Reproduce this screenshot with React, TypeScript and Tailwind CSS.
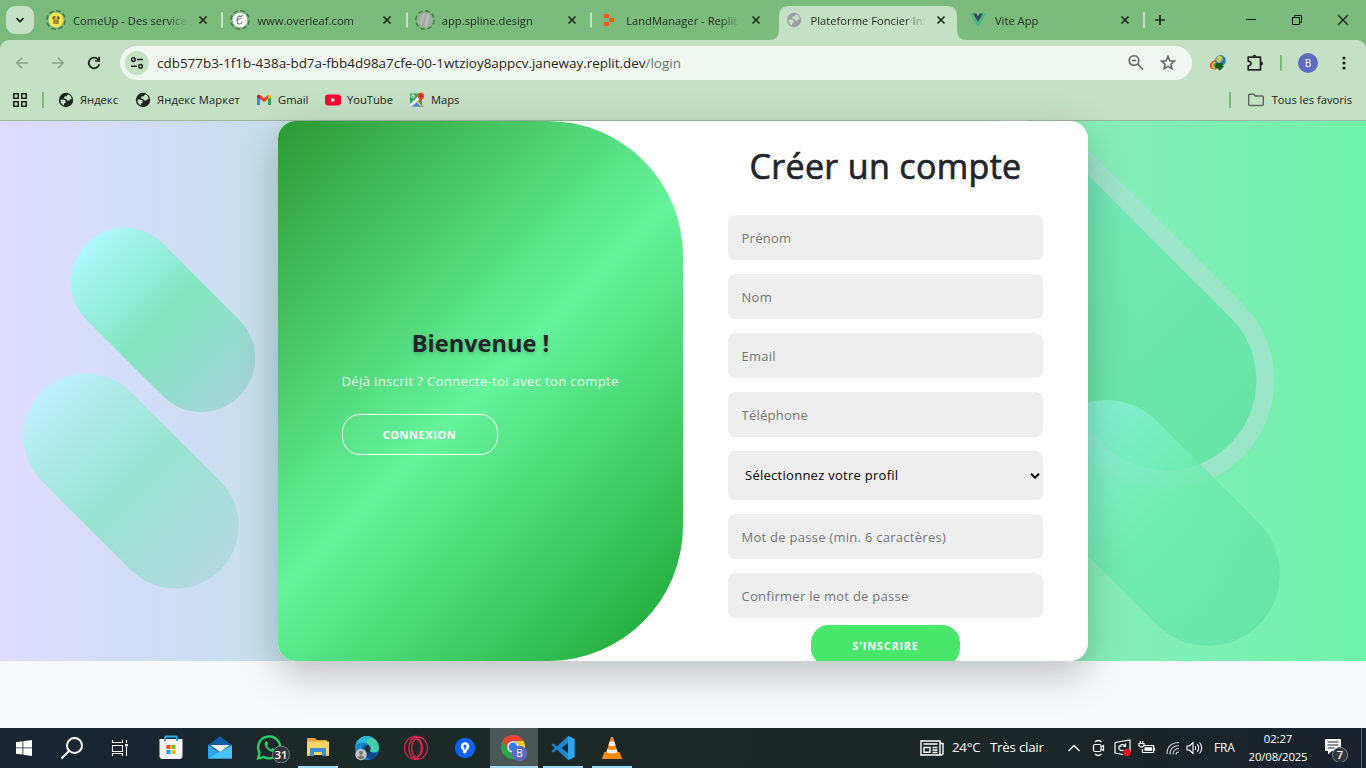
import React from "react";

function Globe({ color, bg }: { color: string; bg: string }) {
  return (
    <svg width="16" height="16" viewBox="0 0 16 16" className="shrink-0">
      <circle cx="8" cy="8" r="7.2" fill={color} />
      <path d="M2.400 7.600 6.200 7.800Q7.800 8 7.600 9.600L7.400 11.200 6 11.200 6 13.600Q2.400 12 2.400 7.600z" fill={bg} />
      <path d="M6.200 6.400V5Q6.200 4.200 7.600 4.200H9V3.200L10.800 2.600Q13.400 4 13.800 7.200H12.400Q11.600 7.200 11.400 8.400H9.200Q8.600 6.400 6.200 6.400z" fill={bg} />
      <path d="M9.600 9h2.600q.6 0 .6 1.400l-1.200 1.200H10.200z" fill={color} />
    </svg>
  );
}

function DashedIcon({ children }: { children: React.ReactNode }) {
  return (
    <svg width="20" height="20" viewBox="0 0 20 20" className="shrink-0">
      <circle cx="10" cy="10" r="9.2" fill="none" stroke="#4d754e" strokeWidth="1.5" strokeDasharray="4.6 2.6" />
      {children}
    </svg>
  );
}

function ComeUpIcon() {
  return (
    <DashedIcon>
      <circle cx="10" cy="10" r="7.3" fill="#ffe94a" />
      <path d="M9.600 6.800H8.200q-1.200 0-1.200 1.100t1.200 1.100h1.400M10.400 9h1.400q1.200 0 1.200-1.100t-1.200-1.100h-.8M7 11h6M7.200 13h5.600" stroke="#3a3a20" strokeWidth="1.200" fill="none" />
    </DashedIcon>
  );
}

function OverleafIcon() {
  return (
    <DashedIcon>
      <circle cx="10" cy="10" r="7.3" fill="#fff" />
      <path d="M11.800 8.200Q8 8.600 7.200 11.200q-.4 2.800 2.200 2.800 2.400-.2 2.400-2.200M8.600 6.800q2.600-.2 4.600-1.600M9.800 5.400q-2.800 1.600-3.200 5" stroke="#7c7c7c" strokeWidth="1.100" fill="none" />
    </DashedIcon>
  );
}

function SplineIcon() {
  return (
    <DashedIcon>
      <circle cx="10" cy="10" r="7.3" fill="#a8a8a8" />
      <path d="M8 4l2-.6L6.500 15l-1.700-1.800zM12 4l2.500 1L12 16.500l-2.500.5z" fill="#bcbcbc" />
    </DashedIcon>
  );
}

function ReplitIcon() {
  return (
    <svg width="16" height="16" viewBox="0 0 16 16" className="shrink-0">
      <g fill="#ff5a0c">
        <rect x="3" y="2" width="5" height="4" rx="1" />
        <rect x="8" y="6" width="5.200" height="4" rx="1" />
        <rect x="3" y="10" width="5" height="4" rx="1" />
      </g>
    </svg>
  );
}

function VueIcon() {
  return (
    <svg width="16" height="16" viewBox="0 0 16 16" className="shrink-0">
      <path d="M0 1.500h3.200L8 9.800l4.800-8.300H16L8 15z" fill="#41b883" />
      <path d="M3.200 1.500h3L8 4.600l1.800-3.100h3L8 9.800z" fill="#35495e" />
    </svg>
  );
}

function CloseX({ color }: { color: string }) {
  return (
    <svg width="16" height="16" viewBox="0 0 16 16" className="shrink-0">
      <path d="M4.500 4.500l7 7M11.500 4.500l-7 7" stroke={color} strokeWidth="1.700" />
    </svg>
  );
}

const tabs = [
  { title: "ComeUp - Des services", icon: <ComeUpIcon />, sep: true },
  { title: "www.overleaf.com", icon: <OverleafIcon />, sep: true },
  { title: "app.spline.design", icon: <SplineIcon />, sep: true },
  { title: "LandManager - Replit", icon: <ReplitIcon />, sep: false },
  { title: "Plateforme Foncier Int", icon: <Globe color="#9a9fa8" bg="#c5e1c5" />, sep: false, active: true },
  { title: "Vite App", icon: <VueIcon />, sep: true },
];

function TabStrip() {
  return (
    <div className="flex h-10 shrink-0 bg-[#7bbb7c]">
      <div className="ml-[6px] mt-[6px] flex size-7 items-center justify-center rounded-[9px] bg-[#c5e1c5]">
        <svg width="12" height="12" viewBox="0 0 12 12">
          <path d="M2.500 4.200 6 7.700l3.500-3.500" stroke="#202421" strokeWidth="1.800" fill="none" />
        </svg>
      </div>
      <div className="ml-1 flex">
        {tabs.map((t) => (
          <div key={t.title} className="relative flex h-10 w-[184.400px] items-center">
            {t.active && (
              <svg className="absolute -left-[7px] top-[6px]" width="198" height="34" viewBox="0 0 198 34">
                <path d="M0 34q10 0 10-10V10Q10 0 20 0H178q10 0 10 10V24q0 10 10 10z" fill="#c5e1c5" />
              </svg>
            )}
            <div className="relative flex w-9 justify-center">{t.icon}</div>
            <div className="relative -ml-[1px] w-[121px] overflow-hidden whitespace-nowrap pt-px text-[11.200px] leading-4 text-[#1f2a20] [mask-image:linear-gradient(to_right,#000_94px,transparent_115px)]">
              {t.title}
            </div>
            <div className="relative ml-[1px]">
              <CloseX color="#202a21" />
            </div>
            {t.sep && <div className="absolute -right-[1px] top-3 h-4 w-[2px] rounded-full bg-[#c5e1c5]" />}
          </div>
        ))}
      </div>
      <svg className="ml-[8px] mt-3" width="16" height="16" viewBox="0 0 16 16">
        <path d="M8 3v10M3 8h10" stroke="#202a21" strokeWidth="1.700" />
      </svg>
      <div className="ml-auto flex pt-[14px]">
        <svg className="w-[46px]" height="12" viewBox="0 0 46 12"><path d="M18 5.500h10" stroke="#111" /></svg>
        <svg className="w-[46px]" height="12" viewBox="0 0 46 12">
          <path d="M18.500 3.500h7v7h-7zM20.500 3.500v-2h7v7h-2" stroke="#111" fill="none" />
        </svg>
        <svg className="w-[46px]" height="12" viewBox="0 0 46 12"><path d="M18 1l10 10M28 1 18 11" stroke="#111" strokeWidth="1.100" /></svg>
      </div>
    </div>
  );
}

function Toolbar() {
  return (
    <div className="bg-[#7bbb7c]">
      <div className="flex h-10 items-center rounded-t-[9px] bg-[#c5e1c5] pt-[6px]">
        <svg className="ml-3" width="20" height="20" viewBox="0 0 20 20"><path d="M16 10H5M10 4.800 4.800 10l5.200 5.200" stroke="#8aa38b" strokeWidth="1.700" fill="none" /></svg>
        <svg className="ml-4" width="20" height="20" viewBox="0 0 20 20"><path d="M4 10h11M10 4.800l5.200 5.200-5.200 5.200" stroke="#8aa38b" strokeWidth="1.700" fill="none" /></svg>
        <svg className="ml-4" width="20" height="20" viewBox="0 0 20 20">
          <path d="M15.200 11.200A5.300 5.300 0 1 1 14 6.400l1.300 1.300" stroke="#202421" strokeWidth="1.800" fill="none" />
          <path d="M16 3.800v5h-5V7.200h3.300V3.800z" fill="#202421" />
        </svg>
        <div className="ml-4 flex h-[34px] w-[1072px] items-center rounded-full bg-[#f0f7f1] px-[5px]">
          <div className="flex size-6 items-center justify-center rounded-full bg-[#c5e1c5]">
            <svg width="14" height="14" viewBox="0 0 14 14" fill="none" stroke="#202421" strokeWidth="1.500">
              <circle cx="3.400" cy="3.600" r="1.800" /><path d="M7 3.600h6M1 10.200h6" /><circle cx="10.600" cy="10.200" r="1.800" />
            </svg>
          </div>
          <div className="ml-[8px] whitespace-nowrap text-[13.450px] leading-5 text-[#1f2320]">
            cdb577b3-1f1b-438a-bd7a-fbb4d98a7cfe-00-1wtzioy8appcv.janeway.replit.dev<span className="text-[#6c736d]">/login</span>
          </div>
          <svg className="ml-auto" width="18" height="18" viewBox="0 0 18 18" fill="none" stroke="#5a605b" strokeWidth="1.600">
            <circle cx="7" cy="6.500" r="4.800" /><path d="M4.800 6.500h4.400M10.500 10l5.500 5.500" />
          </svg>
          <svg className="ml-[14px] mr-[10px]" width="18" height="18" viewBox="0 0 18 18" fill="none" stroke="#5a605b" strokeWidth="1.500">
            <path d="M9 2.600l1.800 4.200 4.700.4-3.600 3 1.100 4.600L9 12.400l-4 2.400 1.100-4.600-3.600-3 4.700-.4z" />
          </svg>
        </div>
        <svg className="ml-[17px]" width="18" height="18" viewBox="0 0 18 18">
          <ellipse cx="7" cy="10.500" rx="6.500" ry="4.500" fill="#e23a2c" transform="rotate(-25 7 10.500)" />
          <ellipse cx="7.500" cy="10.800" rx="5.400" ry="3.600" fill="#f5d63a" transform="rotate(-25 7.500 10.800)" />
          <ellipse cx="8" cy="11" rx="4" ry="2.600" fill="#48b349" />
          <circle cx="11.500" cy="6.500" r="5.400" fill="#3c76b4" />
          <path d="M8 3q3-2 5-.5l.5 3.500-3 3L7 7z" fill="#c5cd55" />
          <path d="M6.500 9.500 14 8.800l-1 2.200 2 1.500-4.500 4.200-1.700-2.700-2.800.5z" fill="#0f5c17" />
        </svg>
        <svg className="ml-[18px]" width="20" height="20" viewBox="0 0 20 20" fill="none" stroke="#202421" strokeWidth="1.700">
          <path d="M3.200 4.200h12.300v12.600H3.200v-4q2.800-.5 2.800-2.300T3.200 8.200z" strokeLinejoin="round" />
          <path d="M7.400 3.800a2 2 0 0 1 4 0zM16 8.500a2 2 0 0 1 0 4z" fill="#202421" stroke="none" />
        </svg>
        <div className="ml-[15px] h-4 w-[2px] rounded-full bg-[#7bbb7c]" />
        <div className="ml-4 flex size-5 items-center justify-center rounded-full bg-[#5c6bc0] text-[10px] font-medium text-white">B</div>
        <svg className="ml-[17px]" width="18" height="18" viewBox="0 0 18 18" fill="#202421">
          <circle cx="9" cy="4" r="1.600" /><circle cx="9" cy="9" r="1.600" /><circle cx="9" cy="14" r="1.600" />
        </svg>
      </div>
    </div>
  );
}

function Bookmarks() {
  return (
    <div className="flex h-[41px] shrink-0 items-center border-b border-[#9cb59d] bg-[#c5e1c5] text-[11.200px] leading-4 text-[#1f2320]">
      <svg className="ml-3" width="16" height="16" viewBox="0 0 16 16" fill="none" stroke="#202421" strokeWidth="1.500">
        <path d="M1.750 1.750h4.500v4.500h-4.500zM9.750 1.750h4.500v4.500h-4.500zM1.750 9.750h4.500v4.500h-4.500zM9.750 9.750h4.500v4.500h-4.500z" />
      </svg>
      <div className="ml-[14px] h-4 w-[2px] bg-[#7bbb7c]" />
      <div className="ml-[14px] flex w-[77px] items-center gap-[6px]"><Globe color="#202421" bg="#c5e1c5" />Яндекс</div>
      <div className="flex w-[121px] items-center gap-[6px] whitespace-nowrap"><Globe color="#202421" bg="#c5e1c5" /><span className="tracking-[0.120px]">Яндекс Маркет</span></div>
      <div className="flex w-[69px] items-center gap-[6px]">
        <svg width="16" height="16" viewBox="0 0 16 16">
          <path d="M1 4v9h3V7z" fill="#4285f4" /><path d="M12 7v6h3V4z" fill="#34a853" />
          <path d="M4 3v4l4 3 4-3V3L8 6z" fill="#ea4335" /><path d="M1 4.500Q1 2 4 3v4L1 5.200z" fill="#c5221f" /><path d="M15 4.500Q15 2 12 3v4l3-1.800z" fill="#fbbc04" />
        </svg>
        Gmail
      </div>
      <div className="flex w-[84px] items-center gap-[6px]">
        <svg width="16" height="16" viewBox="0 0 16 16"><rect y="2.500" width="16" height="11" rx="3" fill="#f03" /><path d="M6.300 5.600v4.800l4-2.400z" fill="#fff" /></svg>
        YouTube
      </div>
      <div className="flex items-center gap-[6px]">
        <svg width="16" height="16" viewBox="0 0 16 16">
          <path d="M1 1.500h12v13H1z" fill="#34a853" /><path d="M7.500 8 15 14.500H2z" fill="#4285f4" /><path d="M1 14.500V12L9.500 4l2 2.500L3 14.500z" fill="#f5f5f5" /><path d="M9 9l4.500 5.500h-2L7.500 10z" fill="#fbc116" />
          <circle cx="3.800" cy="4.200" r="1.500" fill="none" stroke="#fff" /><path d="M8.600 4a3.300 3.300 0 0 1 6.600 0c0 2.200-2.200 3-3.300 6-1.100-3-3.300-3.800-3.300-6z" fill="#ea4335" /><circle cx="11.900" cy="4" r="1.100" fill="#8e1f16" />
        </svg>
        Maps
      </div>
      <div className="ml-auto h-4 w-[2px] bg-[#7bbb7c]" />
      <svg className="ml-4" width="18" height="16" viewBox="0 0 18 16" fill="none" stroke="#5a665b" strokeWidth="1.400">
        <path d="M1.700 3.200q0-1 1-1h4l1.700 1.800h6.900q1 0 1 1v7.500q0 1-1 1H2.700q-1 0-1-1z" />
      </svg>
      <div className="ml-[7px] mr-[14px] whitespace-nowrap">Tous les favoris</div>
    </div>
  );
}

function Hero() {
  return (
    <main className="relative z-10 flex h-[540px] shrink-0 justify-center bg-[linear-gradient(to_right,#dfdcff_0%,#cddef4_15%,#c9e0ee_18%,#8aeebc_79%,#6ff2aa_100%)]">
      <div className="absolute left-[109px] top-[91px] h-[216px] w-[108px] -rotate-45 rounded-full bg-[linear-gradient(180deg,#aef8fb_0%,#82e6be_50%,#a6d6da_100%)]" />
      <div className="absolute left-[68px] top-[234px] h-[252px] w-[126px] -rotate-45 rounded-full bg-[linear-gradient(180deg,#bdf0fc_0%,#98e4cf_50%,#b3d8e0_100%)]" />
      <div className="absolute left-[982px] top-[-33px] h-[432px] w-[216px] -rotate-45 rounded-full border-[18px] border-[#b9dce0]/50 bg-[linear-gradient(180deg,#78ecc4_0%,#70e8b0_50%,#67e5a6_100%)] bg-clip-padding" />
      <div className="absolute left-[1085px] top-[258px] h-[288px] w-[144px] -rotate-45 rounded-full bg-[linear-gradient(180deg,#92f5e4_0%,#6aebae_50%,#64e3a6_100%)] opacity-80" />
      <div className="relative flex w-[810px] rounded-[18px] shadow-[0_13px_40px_rgba(0,0,0,0.24)]">
        <div className="flex w-full overflow-hidden rounded-[18px] bg-white">
          <section className="flex w-[405px] flex-col items-center justify-center rounded-r-[135px] bg-[linear-gradient(135deg,#2c9933_0%,#65f49b_50%,#1ca431_100%)]">
            <div className="flex w-[278px] flex-col">
              <h1 className="text-center text-[23.600px] font-bold leading-[30px] text-[#212529] [text-shadow:0_2px_4px_rgba(0,0,0,0.2)]">Bienvenue !</h1>
              <p className="mt-[13px] whitespace-nowrap text-[13.200px] leading-5 tracking-[0.290px] text-white/85">Déjà inscrit ? Connecte-toi avec ton compte</p>
              <button className="mt-[23px] h-[41px] w-[156px] rounded-[18px] border border-white pt-[2px] text-[11px] font-bold tracking-[0.560px] text-white">CONNEXION</button>
            </div>
          </section>
          <section className="flex w-[405px] flex-col items-center px-[45px] text-[13px] tracking-[0.270px]">
            <h1 className="mt-[23px] whitespace-nowrap text-[34px] font-medium leading-[44px] tracking-[0.340px] text-[#212529] [-webkit-text-stroke:0.700px_#212529]">Créer un compte</h1>
            <form className="mt-[27px] flex w-full flex-col gap-[14px]">
              <input className="h-[45px] rounded-[7px] bg-[#eee] px-[13.500px] placeholder:text-[#757575]" placeholder="Prénom" />
              <input className="h-[45px] rounded-[7px] bg-[#eee] px-[13.500px] placeholder:text-[#757575]" placeholder="Nom" />
              <input className="h-[45px] rounded-[7px] bg-[#eee] px-[13.500px] placeholder:text-[#757575]" placeholder="Email" />
              <input className="h-[45px] rounded-[7px] bg-[#eee] px-[13.500px] placeholder:text-[#757575]" placeholder="Téléphone" />
              <div className="flex h-[49px] items-center justify-between rounded-[7px] bg-[#eee] pl-[17px] pr-[3px] text-black">
                <span className="pt-px">Sélectionnez votre profil</span>
                <svg width="10" height="8" viewBox="0 0 10 8"><path d="M1 1.800l4 3.800 4-3.800" stroke="#000" strokeWidth="2" fill="none" /></svg>
              </div>
              <input className="h-[45px] rounded-[7px] bg-[#eee] px-[13.500px] placeholder:text-[#757575]" placeholder="Mot de passe (min. 6 caractères)" />
              <input className="h-[45px] rounded-[7px] bg-[#eee] px-[13.500px] placeholder:text-[#757575]" placeholder="Confirmer le mot de passe" />
            </form>
            <button className="mt-[7px] h-[41px] w-[149px] shrink-0 rounded-[18px] bg-[#48e66a] pt-px text-[11px] font-bold tracking-[0.750px] text-white">S'INSCRIRE</button>
          </section>
        </div>
      </div>
    </main>
  );
}

const Store = () => (
  <svg width="26" height="28" viewBox="0 0 26 28">
    <path d="M7 7V4Q7 2.500 8.500 2.500h9Q19 2.500 19 4v3" fill="none" stroke="#27b5ea" strokeWidth="1.800" />
    <path d="M1.500 5h23v17q0 3-3 3h-17q-3 0-3-3z" fill="#f5f5f5" />
    <path d="M7 5v2M19 5v2" stroke="#1e8fc4" strokeWidth="1.800" />
    <path d="M8.500 11h4v4h-4z" fill="#f25022" /><path d="M13.500 11h4v4h-4z" fill="#7fba00" /><path d="M8.500 16h4v4h-4z" fill="#00a4ef" /><path d="M13.500 16h4v4h-4z" fill="#ffb900" />
  </svg>
);
const Mail = () => (
  <svg width="26" height="26" viewBox="0 0 26 26">
    <path d="M1 10 13 1.500 25 10v3H1z" fill="#0f5fa8" /><path d="M3.500 10h19L13 17z" fill="#fff" /><path d="M1 10l12 7.500L25 10v13.500H1z" fill="#2aa8ee" /><path d="M1 23.500 25 10v13.500z" fill="#49c3fb" />
  </svg>
);
const WhatsApp = () => (
  <svg width="36" height="30" viewBox="0 0 36 30" className="translate-x-[4px]">
    <path d="M3 25.500l1.600-5.600A11 11 0 1 1 8.800 24z" fill="none" stroke="#25d366" strokeWidth="2.300" />
    <path d="M10.500 8.500c-3 3 2 10 7.500 10.500 1.500 0 3-1.500 2.500-2.500l-3-1.500-1.500 1.500c-2-.8-3.200-2-4-4l1.200-1.500-1.200-2.800z" fill="#25d366" />
    <circle cx="26" cy="21.500" r="8.500" fill="#303638" stroke="#7e8586" />
    <text x="26" y="25.700" textAnchor="middle" fontSize="11.500" fontWeight="600" fill="#fff">31</text>
  </svg>
);
const Explorer = () => (
  <svg width="24" height="22" viewBox="0 0 24 22">
    <path d="M1 2q0-1 1-1h7l2 2h10v4H1z" fill="#e8a33d" /><path d="M1 4.500h22V18H1z" fill="#ffd766" /><path d="M4 19v-8h16v8h-4v-4H8v4z" fill="#3b8fd8" /><path d="M1 17h3v2H1zM20 17h3v2h-3z" fill="#f3bd4a" />
  </svg>
);
const Edge = () => (
  <svg width="26" height="26" viewBox="0 0 26 26">
    <circle cx="13" cy="13" r="12" fill="#1a86d0" />
    <path d="M1.500 10A12 12 0 0 1 25 12.500q0 5-5.500 5-3 0-3.500-1.500 2-2 0-5-3-4.500-9-3.500-4 .5-5.500 2.500z" fill="#43cfa8" />
    <path d="M1.500 10A12 12 0 0 1 18 2q-6 2-5 6-7-2-11.500 2z" fill="#29b6dc" />
    <path d="M8 14q1-5 6-4 3 2 2 5-1.500 2 4 2.800 2 0 3.500-.8-2 6-7 7.500Q8 22 8 14z" fill="#0c4a91" /><path d="M14 10q3 2 1.600 5.400-1 1.800 1 2.600-5 .3-5-4 0-3 2.400-4z" fill="#1c2a2a" />
    <circle cx="7" cy="19.500" r="5.700" fill="#c3c3c3" /><circle cx="7" cy="17.700" r="2" fill="#777" /><path d="M3.500 22.500q3.500-4.500 7 0Q7 26 3.500 22.500z" fill="#777" />
  </svg>
);
const Opera = () => (
  <svg width="26" height="26" viewBox="0 0 26 26" fill="none" stroke="#e0224e" strokeWidth="1.300">
    <circle cx="13" cy="13" r="11.500" /><path d="M16 2.200Q6 2 6 13t10 10.800" /><ellipse cx="13.500" cy="13" rx="4.800" ry="9" /><path d="M14 4q5.500 1.500 5.500 9T14 22" />
  </svg>
);
const BlueApp = () => (
  <svg width="22" height="22" viewBox="0 0 22 22">
    <circle cx="11" cy="11" r="10.200" fill="#0b62f5" /><circle cx="11" cy="9.500" r="4.300" fill="#fff" /><path d="M9 11h3.600v4.500q-2 2-3.600 0z" fill="#fff" /><circle cx="11" cy="9" r="1.600" fill="#0b62f5" /><path d="M10.300 9h1.400v3.500h-1.400z" fill="#0b62f5" />
  </svg>
);
const Chrome = () => (
  <svg width="28" height="28" viewBox="0 0 28 28">
    <circle cx="13" cy="13" r="12" fill="#2ea24c" />
    <path d="M2.600 7A12 12 0 0 1 23.400 7H13a6 6 0 0 0-5.400 8.500z" fill="#e94335" /><path d="M23.400 7A12 12 0 0 1 13 25l5.200-9A6 6 0 0 0 13 7z" fill="#fcc934" />
    <circle cx="13" cy="13" r="5.700" fill="#fff" /><circle cx="13" cy="13" r="4.400" fill="#2d7df0" />
    <circle cx="19.500" cy="19.500" r="7.800" fill="#5c6bc0" /><text x="19.500" y="23.100" textAnchor="middle" fontSize="10" fill="#fff">B</text>
  </svg>
);
const Code = () => (
  <svg width="26" height="26" viewBox="0 0 26 26">
    <path d="M18 1l6.500 3v18L18 25 7 14.500 3.500 17.500 1.500 16.200 5 13 1.500 9.800l2-1.300L7 11.500z" fill="#1c86cf" /><path d="M18 1l6.500 3v18L18 25z" fill="#2ba6ec" /><path d="M18 8v10l-6.500-5z" fill="#1b2728" />
  </svg>
);
const Vlc = () => (
  <svg width="24" height="26" viewBox="0 0 24 26">
    <path d="M4.500 17h15l2.800 7H1.700z" fill="#f58a12" /><path d="M11 2h2l5.500 18q-6.500 3-13 0z" fill="#f58a12" /><path d="M9.600 6.500h4.800l1.200 4q-3.600 1.400-7.200 0zM7.400 14q4.600 1.800 9.200 0l1 3.300q-5.600 2.500-11.200 0z" fill="#eee" />
  </svg>
);

const apps = [
  { icon: <Store />, bar: "" },
  { icon: <Mail />, bar: "" },
  { icon: <WhatsApp />, bar: "" },
  { icon: <Explorer />, bar: "w-10" },
  { icon: <Edge />, bar: "" },
  { icon: <Opera />, bar: "" },
  { icon: <BlueApp />, bar: "" },
  { icon: <Chrome />, bar: "w-12", active: true },
  { icon: <Code />, bar: "w-10" },
  { icon: <Vlc />, bar: "w-10" },
];

function Taskbar() {
  return (
    <footer className="flex h-10 shrink-0 items-center bg-[linear-gradient(to_right,#1a2433_0%,#1a2530_12%,#1c2a27_24%,#1b2726_60%,#1a2428_85%,#19222d_100%)] text-white">
      <div className="flex w-12 justify-center">
        <svg width="16" height="16" viewBox="0 0 16 16" fill="#fff"><path d="M0 2.200 6.500 1.300v6.200H0zM7.300 1.200 16 0v7.500H7.300zM0 8.300h6.500v6.300L0 13.700zM7.300 8.300H16V16l-8.700-1.200z" /></svg>
      </div>
      <div className="flex w-12 justify-center">
        <svg width="24" height="24" viewBox="0 0 24 24" fill="none" stroke="#fff" strokeWidth="2"><circle cx="14.500" cy="9.500" r="7.500" /><path d="M9 15l-7.500 7.500" /></svg>
      </div>
      <div className="flex w-[50px] justify-center pr-[3px]">
        <svg width="18" height="16" viewBox="0 0 18 16" fill="none" stroke="#fff" strokeWidth="1.100"><path d="M1.500 0v2.500h10V0M1.500 5.500h10v6h-10zM1.500 16v-2.500h10V16M15.500 0v3M15.500 7v9" /><path d="M14 4h3v2.500h-3z" fill="#fff" stroke="none" /></svg>
      </div>
      {apps.map((a, i) => (
        <div key={i} className="flex h-10 w-[49px] justify-center">
          <div className={`relative flex h-10 w-12 items-center justify-center ${a.active ? "bg-[#4b5656]" : ""}`}>
            {a.icon}
            {a.bar && <div className={`absolute bottom-0 h-[2px] bg-[#9edcf5] ${a.bar}`} />}
          </div>
        </div>
      ))}
      <div className="ml-auto flex h-10 items-center">
        <svg width="24" height="16" viewBox="0 0 24 16" fill="none" stroke="#fff" strokeWidth="1.400"><path d="M1 1h19v14H1zM20 3.500h3V13q0 2-2 2H19M3.500 4h14M12.500 7.500h5M12.500 10h5M12.500 12.500h5" /><path d="M4 7.500h6v4.800H4z" /></svg>
        <div className="ml-2 w-[38px] whitespace-nowrap text-[13.200px] tracking-[-0.200px]">24°C</div>
        <div className="w-[54px] whitespace-nowrap text-[13.300px] tracking-[-0.220px]">Très clair</div>
        <svg className="ml-6" width="12" height="8" viewBox="0 0 12 8" fill="none" stroke="#fff" strokeWidth="1.300"><path d="M.5 7 6 1.500 11.500 7" /></svg>
        <svg className="ml-[12px]" width="14" height="18" viewBox="0 0 14 18" fill="none" stroke="#fff" strokeWidth="1.200"><rect x="1.500" y="5.500" width="7.500" height="7" rx="1.500" /><path d="M9 8l2.500-1.500v5L9 10M3 3q3-3 6.500 0M3 15q3 3 6.500 0" /></svg>
        <svg className="ml-[8px]" width="18" height="18" viewBox="0 0 18 18" fill="none" stroke="#fff" strokeWidth="1.200"><path d="M1 3.500 16 1v12M1 3.500V14l8 1.500M5 10.500V7.500h2.500M11.500 4.500v3H9M5 7.800q3-3.800 6-1M5.500 10.500q2 2 4 .5" /><circle cx="13" cy="13.500" r="3.700" fill="#e81123" stroke="none" /></svg>
        <svg className="ml-[6px]" width="18" height="14" viewBox="0 0 18 14" fill="none" stroke="#fff" strokeWidth="1.200"><path d="M6 4.500h9.500v7h-11V8M16.500 6.500v3M1 2.500h5v2.200q-2.500 3-5 0zM2.300 0v2.500M4.700 0v2.500" /><path d="M6.500 6.200h7.500v3.600H6.500z" fill="#fff" stroke="none" /></svg>
        <svg className="ml-[10px]" width="14" height="14" viewBox="0 0 14 14" fill="none" stroke="#c6cccc" strokeWidth="1.200"><path d="M1 13Q1 2 13 1.500M4 13.500Q4 5 13 4.500M7 13.500Q7 8 13 7.500M10 13.500q0-2.500 3-2.500" /></svg>
        <svg className="ml-[6px]" width="18" height="14" viewBox="0 0 18 14" fill="none" stroke="#fff" strokeWidth="1.100"><path d="M1 5h2.500L7 1.500v11L3.500 9H1zM9 5q1.500 2 0 4M11.200 3.200q3 3.800 0 7.600M13.500 1.500q4.500 5.500 0 11" /></svg>
        <div className="ml-[10px] w-[22px] text-[12px] tracking-[-0.200px]">FRA</div>
        <div className="ml-[10px] w-[64px] whitespace-nowrap text-center text-[11.400px] leading-[18px] tracking-[-0.150px]">
          <div>02:27</div>
          <div>20/08/2025</div>
        </div>
        <svg className="ml-[13px]" width="28" height="28" viewBox="0 0 28 28">
          <path d="M2 5h16v12h-9l-4 3.500V17H2z" fill="#fff" /><path d="M4.500 8h11M4.500 11h11M4.500 14h7" stroke="#1a2428" strokeWidth="1.100" />
          <circle cx="17" cy="21" r="7.600" fill="#303639" stroke="#7f8587" /><text x="17" y="25" textAnchor="middle" fontSize="11" fontWeight="600" fill="#fff">7</text>
        </svg>
        <div className="ml-[10px] mr-[4px] h-10 w-px bg-[#5e6568]" />
      </div>
    </footer>
  );
}

export default function App() {
  return (
    <div className="flex h-[768px] w-[1366px] flex-col overflow-hidden bg-[#f8f9fb] font-['Open_Sans','Noto_Sans',sans-serif]">
      <TabStrip />
      <Toolbar />
      <Bookmarks />
      <Hero />
      <div className="flex-1" />
      <Taskbar />
    </div>
  );
}
